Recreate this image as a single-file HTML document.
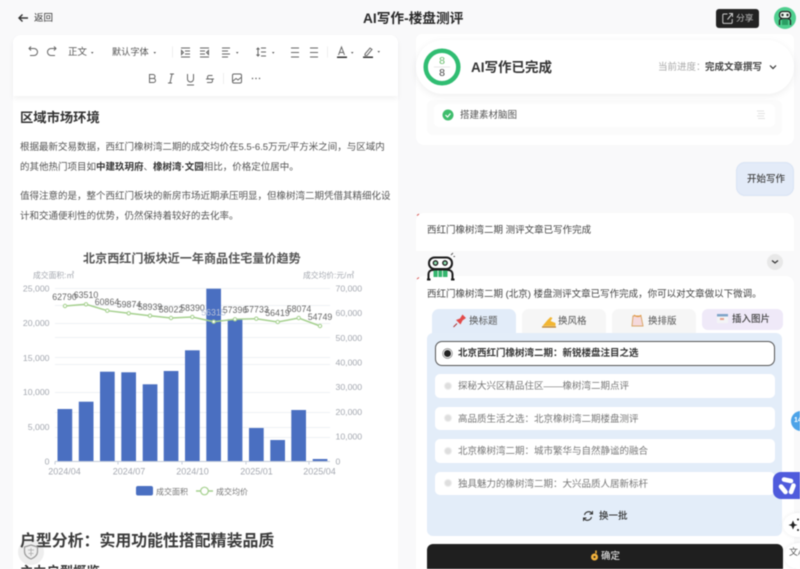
<!DOCTYPE html>
<html lang="zh"><head><meta charset="utf-8"><title>AI写作-楼盘测评</title>
<style>
html,body{margin:0;padding:0;width:800px;height:569px;overflow:hidden;background:#f9f9fa}
#r{position:relative;width:800px;height:569px;overflow:hidden;filter:blur(.4px);font-family:"Liberation Sans","Noto Sans CJK SC",sans-serif;color:#444}
#r div{position:absolute;box-sizing:border-box}
.t{white-space:nowrap;line-height:1;position:absolute}
b{font-weight:700}
.opt{left:435px;width:340px;background:#fff;border-radius:5px}
.rad{position:absolute;box-sizing:border-box;left:443.500px;width:8px;height:8px;border-radius:50%;background:#dedede;border:1.500px solid #eee}
.tab{font-size:9.500px;color:#555}
svg{position:absolute;left:0;top:0}
</style></head><body><div id="r">

<div style="left:13px;top:35px;width:385px;height:540px;background:#fff;border-radius:8px 8px 0 0"></div>
<div style="left:13px;top:35px;width:385px;height:61px;background:#fff;border-radius:8px 8px 0 0;box-shadow:0 3px 6px rgba(0,0,0,.05)"></div>

<span class="t" style="left:34px;top:13.500px;font-size:9.500px;color:#333">返回</span>
<span class="t" style="left:363px;top:11.500px;font-size:13.700px;font-weight:700;color:#2a2a2a">AI写作-楼盘测评</span>

<span class="t" style="left:68px;top:48px;font-size:9.500px;color:#555">正文</span>
<span class="t" style="left:112px;top:48px;font-size:9.200px;color:#555">默认字体</span>

<span class="t" style="left:20px;top:111px;font-size:13.300px;font-weight:700;color:#333">区域市场环境</span>
<span class="t" style="left:20px;top:142.500px;font-size:9.500px;color:#555">根据最新交易数据，西红门橡树湾二期的成交均价在5.5-6.5万元/平方米之间，与区域内</span>
<span class="t" style="left:20px;top:162.500px;font-size:9.500px;color:#555">的其他热门项目如<b style="color:#333">中建玖玥府</b>、<b style="color:#333">橡树湾·文园</b>相比，价格定位居中。</span>
<span class="t" style="left:20px;top:191.500px;font-size:9.500px;color:#555">值得注意的是，整个西红门板块的新房市场近期承压明显，但橡树湾二期凭借其精细化设</span>
<span class="t" style="left:20px;top:211.500px;font-size:9.500px;color:#555">计和交通便利性的优势，仍然保持着较好的去化率。</span>

<div style="left:18px;top:539px;width:26px;height:26px;border-radius:50%;background:rgba(232,232,232,.75)"></div>
<span class="t" style="left:20px;top:534px;font-size:15.900px;font-weight:700;color:#3a3a3a">户型分析：实用功能性搭配精装品质</span>
<span class="t" style="left:20px;top:565px;font-size:13.300px;font-weight:700;color:#333">主力户型概览</span>

<!-- right column -->
<div style="left:416px;top:34px;width:378px;height:111px;background:#fff;border-radius:6px 6px 8px 8px"></div>
<div style="left:427px;top:100px;width:355px;height:35px;background:#fbfbfb;border-radius:6px"></div>
<div style="left:434px;top:104px;width:341px;height:23px;background:#fff;border-radius:5px"></div>
<div style="left:416px;top:40px;width:378px;height:54px;background:#fff;border-radius:27px;box-shadow:0 2px 8px rgba(0,0,0,.07)"></div>
<span class="t" style="left:471px;top:60.500px;font-size:13.500px;font-weight:700;color:#333">AI写作已完成</span>
<span class="t" style="left:658px;top:63px;font-size:9.500px;color:#aaa">当前进度：</span>
<span class="t" style="left:705px;top:63px;font-size:9.500px;font-weight:700;color:#444">完成文章撰写</span>
<span class="t" style="left:436px;top:56px;width:12px;text-align:center;font-size:10.500px;color:#66bb6a">8</span>
<span class="t" style="left:436px;top:68px;width:12px;text-align:center;font-size:10.500px;color:#444">8</span>
<span class="t" style="left:460px;top:111px;font-size:9.500px;color:#555">搭建素材脑图</span>

<div style="left:736px;top:162px;width:58px;height:34px;background:#e3ebf8;border:1px solid #d8e3f4;border-radius:9px"></div>
<span class="t" style="left:747px;top:175px;font-size:9.500px;font-weight:500;color:#444">开始写作</span>

<div style="left:416px;top:213px;width:378px;height:38px;background:#fff;border-radius:8px 8px 0 0"></div>
<span class="t" style="left:427px;top:226px;font-size:9.500px;color:#444">西红门橡树湾二期 测评文章已写作完成</span>
<div style="left:416px;top:276px;width:378px;height:300px;background:#fff;border-radius:8px 8px 0 0"></div>
<span class="t" style="left:427px;top:290px;font-size:9.500px;color:#444">西红门橡树湾二期 (北京) 楼盘测评文章已写作完成，你可以对文章做以下微调。</span>

<div style="left:432px;top:309px;width:84px;height:26px;background:#e2ecf9;border-radius:7px 7px 0 0"></div>
<div style="left:522px;top:309px;width:84px;height:24px;background:#f6f6f6;border-radius:7px 7px 0 0"></div>
<div style="left:612px;top:309px;width:84px;height:24px;background:#f6f6f6;border-radius:7px 7px 0 0"></div>
<div style="left:702px;top:309px;width:81px;height:21px;background:#efe9f8;border-radius:6px"></div>
<span class="t tab" style="left:469px;top:317px">换标题</span>
<span class="t tab" style="left:558px;top:317px">换风格</span>
<span class="t tab" style="left:648px;top:317px">换排版</span>
<span class="t tab" style="left:732px;top:315px;color:#444;font-weight:500">插入图片</span>

<div style="left:427px;top:333px;width:355px;height:203px;background:#e3edf9;border-radius:6px"></div>
<div class="opt" style="top:341px;height:25px;border:1px solid #555;border-radius:7px"></div>
<div class="opt" style="top:374px;height:24px"></div>
<div class="opt" style="top:407px;height:23px"></div>
<div class="opt" style="top:439px;height:24px"></div>
<div class="opt" style="top:472px;height:23px"></div>
<span class="rad" style="left:443px;top:348.500px;width:9px;height:9px;background:#222;border:1.500px solid #fff;box-shadow:0 0 0 .7px #777"></span>
<span class="rad" style="top:382px"></span>
<span class="rad" style="top:414px"></span>
<span class="rad" style="top:447px"></span>
<span class="rad" style="top:479px"></span>
<span class="t" style="left:458px;top:349px;font-size:9.500px;font-weight:700;color:#333">北京西红门橡树湾二期：新锐楼盘注目之选</span>
<span class="t" style="left:458px;top:382px;font-size:9.500px;color:#777">探秘大兴区精品住区——橡树湾二期点评</span>
<span class="t" style="left:458px;top:414.500px;font-size:9.500px;color:#777">高品质生活之选：北京橡树湾二期楼盘测评</span>
<span class="t" style="left:458px;top:447px;font-size:9.500px;color:#777">北京橡树湾二期：城市繁华与自然静谧的融合</span>
<span class="t" style="left:458px;top:479.500px;font-size:9.500px;color:#777">独具魅力的橡树湾二期：大兴品质人居新标杆</span>
<span class="t" style="left:599px;top:512px;font-size:9.500px;font-weight:500;color:#333">换一批</span>

<div style="left:427px;top:544px;width:356px;height:30px;background:#1f1f1f;border-radius:6px"></div>
<span class="t" style="left:601px;top:552px;font-size:9.500px;font-weight:500;color:#ddd">确定</span>

<div style="left:716px;top:9px;width:43px;height:19px;background:#222;border-radius:3px"></div>
<span class="t" style="left:736px;top:14px;font-size:8.800px;color:#bbb">分享</span>

<!-- floating -->
<div style="left:791px;top:411px;width:20px;height:20px;border-radius:50%;background:#4da3e8"></div>
<span class="t" style="left:794px;top:417px;font-size:7px;font-weight:700;color:#fff">14</span>
<div style="left:773px;top:472px;width:30px;height:27px;background:#4f5bdc;border-radius:8px 0 0 8px"></div>
<div style="left:783px;top:513px;width:30px;height:24px;border-radius:50%;background:#fff;box-shadow:0 0 4px rgba(0,0,0,.08)"></div>
<div style="left:784px;top:543px;width:30px;height:26px;border-radius:50%;background:#fff;box-shadow:0 0 4px rgba(0,0,0,.08)"></div>
<span class="t" style="left:789px;top:548px;font-size:9px;color:#555">文<span style="font-size:7px">A</span></span>

<svg width="800" height="569" viewBox="0 0 800 569" fill="none">
 <!-- back arrow -->
 <path d="M28 18H19M22.500 14.500L19 18l3.500 3.500" stroke="#333" stroke-width="1.400"/>
 <!-- toolbar -->
 <g stroke="#666" stroke-width="1">
  <path d="M29 48.500h5a3.300 3.300 0 0 1 0 7h-4M31 46.500l-2 2 2 2"/>
  <path d="M56 48.500h-5a3.300 3.300 0 0 0 0 7h4M54 46.500l2 2-2 2"/>
  <path d="M181 48h9M185 51h5M185 54h5M181 57h9M181.500 50.500v4l2-2z"/>
  <path d="M200 48h9M200 51h5M200 54h5M200 57h9M208.500 50.500v4l-2-2z"/>
  <path d="M222 48h8M222 51h6M222 54h8M222 57h6"/>
  <path d="M261 48h5M261 52h5M261 56h5M258 48v8M256.500 49.500l1.500-1.500 1.500 1.500M256.500 54.500l1.500 1.500 1.500-1.500"/>
  <path d="M291 48h8M291 52.500h8M291 57h8"/>
  <path d="M310 48h8M310 52.500h8M310 57h8"/>
  <path d="M338.500 55l3-8 3 8M339.500 52.500h4"/>
  <path d="M365 54l5-6 2 1.500-5 6h-2z"/>
  <path d="M172.500 46.500v11M327.500 46.500v11M223.500 73v11" stroke="#eee"/>
  <path d="M149.500 74.500h3.500a2 2 0 0 1 0 4h-3.500zM149.500 78.500h4a2 2 0 0 1 0 4h-4zM149.500 74v9"/>
  <path d="M170 74h4M168 83h4M172 74l-2 9"/>
  <path d="M187.500 74v5a3 3 0 0 0 6 0v-5M187 85h7"/>
  <path d="M212.500 75.500h-4a2 2 0 0 0 0 3.500h3a2 2 0 0 1 0 3.500h-4.500M206 79h8"/>
  <rect x="232.500" y="74" width="9" height="9" rx="1.500"/>
  <path d="M233 81l3-2.500 2 1.500 3-2.500"/>
 </g>
 <g fill="#555">
  <path d="M91 52h2.500l-1.250 1.800zM153.500 52h2.500l-1.250 1.800zM236 52h2.500l-1.250 1.800zM272 52h2.500l-1.250 1.800zM351 52h2.500l-1.250 1.800zM377.500 51h2.500l-1.250 1.800z"/>
  <rect x="337" y="56.500" width="10" height="1.500" fill="#333"/>
  <rect x="363" y="56.500" width="10" height="1.500" fill="#333"/>
  <circle cx="252.500" cy="78.500" r=".7"/><circle cx="256" cy="78.500" r=".7"/><circle cx="259.500" cy="78.500" r=".7"/>
 </g>

 <!-- chart -->
 <g stroke="#eef1f4" stroke-width="1">
  <path d="M55 288.500H330M55 305.500H330M55 323.500H330M55 337.500H330M55 357.500H330M55 364.500H330M55 392.500H330M55 412.500H330M55 427.500H330M55 437.500H330"/>
 </g>
 <g fill="#4a6fc1">
  <rect x="57.500" y="409" width="14.700" height="52"/><rect x="78.800" y="401.700" width="14.700" height="59.300"/>
  <rect x="100" y="371.700" width="14.700" height="89.300"/><rect x="121.300" y="372.300" width="14.700" height="88.700"/>
  <rect x="142.700" y="384.300" width="14.700" height="76.700"/><rect x="163.700" y="371" width="14.700" height="90"/>
  <rect x="185" y="350.300" width="14.700" height="110.700"/><rect x="206.300" y="288.700" width="14.700" height="172.300"/>
  <rect x="227.700" y="319.300" width="14.700" height="141.700"/><rect x="249" y="428" width="14.700" height="33"/>
  <rect x="270.300" y="440" width="14.700" height="21"/><rect x="291.300" y="410" width="14.700" height="51"/>
  <rect x="312.700" y="459" width="14.700" height="2"/>
 </g>
 <path d="M55 461.500H330M55 461.500v3M118 461.500v3M182 461.500v3M246 461.500v3M309 461.500v3" stroke="#c4ccd8" stroke-width="1"/>
 <polyline points="65,306 86,304.300 107.300,310.700 128.700,313.300 150,315.700 171,318 192.300,317 213.700,321.700 235,319.300 256.300,318.700 277.700,322 298.700,318 320,326" stroke="#a5d08e" stroke-width="1.500"/>
 <g fill="#fff" stroke="#a5d08e" stroke-width="1">
  <circle cx="65" cy="306" r="1.700"/><circle cx="86" cy="304.300" r="1.700"/><circle cx="107.300" cy="310.700" r="1.700"/><circle cx="128.700" cy="313.300" r="1.700"/><circle cx="150" cy="315.700" r="1.700"/><circle cx="171" cy="318" r="1.700"/><circle cx="192.300" cy="317" r="1.700"/><circle cx="213.700" cy="321.700" r="1.700"/><circle cx="235" cy="319.300" r="1.700"/><circle cx="256.300" cy="318.700" r="1.700"/><circle cx="277.700" cy="322" r="1.700"/><circle cx="298.700" cy="318" r="1.700"/><circle cx="320" cy="326" r="1.700"/>
 </g>
 <g font-family="Liberation Sans,sans-serif" font-size="8.800" fill="#666" text-anchor="middle">
  <text x="64.500" y="300">62790</text><text x="86" y="298">63510</text><text x="107" y="305">60864</text><text x="129" y="307.500">59874</text><text x="150" y="310">58939</text><text x="171" y="312.500">58022</text><text x="192.500" y="311">58390</text><text x="213.500" y="315.500" fill="#b8c2d8">56315</text><text x="235" y="313">57396</text><text x="256.500" y="312.500">57733</text><text x="277.500" y="316">56419</text><text x="299" y="312">58074</text><text x="320" y="320">54749</text>
 </g>
 <g font-family="Liberation Sans,sans-serif" font-size="8.700" fill="#a4a8b0" text-anchor="end">
  <text x="49.500" y="291.500">25,000</text><text x="49.500" y="326">20,000</text><text x="49.500" y="361">15,000</text><text x="49.500" y="395">10,000</text><text x="49.500" y="430">5,000</text><text x="49.500" y="464.500">0</text>
 </g>
 <g font-family="Liberation Sans,sans-serif" font-size="8.700" fill="#a4a8b0">
  <text x="335.500" y="291.500">70,000</text><text x="335.500" y="316">60,000</text><text x="335.500" y="341">50,000</text><text x="335.500" y="365.500">40,000</text><text x="335.500" y="390">30,000</text><text x="335.500" y="415">20,000</text><text x="335.500" y="439.500">10,000</text><text x="335.500" y="464.500">0</text>
 </g>
 <g font-family="Liberation Sans,sans-serif" font-size="9" fill="#a4a8b0" text-anchor="middle">
  <text x="64.500" y="474.500">2024/04</text><text x="129" y="474.500">2024/07</text><text x="192.500" y="474.500">2024/10</text><text x="256.500" y="474.500">2025/01</text><text x="319.500" y="474.500">2025/04</text>
 </g>
 <g font-family="Liberation Sans,Noto Sans CJK SC,sans-serif">
  <text x="83" y="262.500" font-size="12.100" font-weight="700" fill="#555">北京西红门板块近一年商品住宅量价趋势</text>
  <text x="33" y="278" font-size="7.800" fill="#a4a8b0">成交面积:㎡</text>
  <text x="303" y="278" font-size="7.800" fill="#a4a8b0">成交均价:元/㎡</text>
  <text x="156" y="494.500" font-size="8" fill="#777">成交面积</text>
  <text x="216" y="494.500" font-size="8" fill="#777">成交均价</text>
 </g>
 <rect x="136" y="486" width="17" height="9.500" rx="2" fill="#4a6fc1"/>
 <path d="M196 491h17" stroke="#a5d08e" stroke-width="1.500"/>
 <circle cx="204.500" cy="491" r="3.800" fill="#fff" stroke="#a5d08e" stroke-width="1.200"/>

 <!-- shield -->
 <path d="M31 545l6.500 2v4.500c0 4-3 6-6.500 7.500-3.500-1.500-6.500-3.500-6.500-7.500V547z" stroke="#999" stroke-width="1.200"/>
 <path d="M28 550h6M31 548v8M28.500 553.500h5" stroke="#aaa" stroke-width=".8"/>

 <!-- share icon -->
 <path d="M727.500 14h-3.500a1.200 1.200 0 0 0-1.200 1.200v7a1.200 1.200 0 0 0 1.200 1.200h7a1.200 1.200 0 0 0 1.200-1.200V19M727.500 19.500l4.500-5.500M729 13.500h3.500V17" stroke="#ccc" stroke-width="1"/>
 <!-- avatar -->
 <circle cx="785" cy="18" r="11" fill="#4fcf8f"/>
 <rect x="779.500" y="11.500" width="11" height="7" rx="3" fill="#eaf7ee" stroke="#222" stroke-width="1.300"/>
 <circle cx="782.500" cy="15" r="1.200" fill="#222"/><circle cx="787.500" cy="15" r="1.200" fill="#222"/>
 <path d="M779.500 25v-4a2 2 0 0 1 2-2h7a2 2 0 0 1 2 2v4" stroke="#222" stroke-width="1.300"/>
 <rect x="782" y="19" width="6" height="6" fill="#2a9e63"/>

 <!-- ring -->
 <circle cx="442" cy="67" r="16.300" stroke="#30bd72" stroke-width="4.500"/>
 <path d="M434 67h16" stroke="#ddd" stroke-width=".7"/>
 <!-- chevrons -->
 <path d="M770 65.500l3 3 3-3" stroke="#333" stroke-width="1.200"/>
 <!-- check -->
 <circle cx="448" cy="115" r="5.500" fill="#3ebd6c"/>
 <path d="M445.500 115l2 2 3-3.500" stroke="#fff" stroke-width="1.200"/>
 <path d="M757 111h7M758 113.500h7M757 116h7M758 118.500h7" stroke="#e2e2e2" stroke-width="1"/>
 <!-- red ticks -->
 <path d="M417 215.500l2-1.500M417 279l2-1.500" stroke="#d9534f" stroke-width="1"/>
 <!-- robot -->
 <rect x="429" y="257.500" width="23" height="11.500" rx="5.500" fill="#fff" stroke="#1c1c1c" stroke-width="2"/>
 <circle cx="435.500" cy="263" r="2.200" stroke="#1c1c1c" stroke-width="1.300" fill="#8fdcae"/>
 <circle cx="445" cy="263" r="2.200" stroke="#1c1c1c" stroke-width="1.300" fill="#8fdcae"/>
 <path d="M428.500 279v-5a4 4 0 0 1 4-4h16a4 4 0 0 1 4 4v5" stroke="#1c1c1c" stroke-width="2"/>
 <rect x="433.500" y="270.500" width="14" height="6.500" fill="#35b56e"/>
 <path d="M438 270.500v6.500M442.500 270.500v6.500" stroke="#fff" stroke-width=".8"/>
 <path d="M427 279.500h3.500M451 279.500h3.500" stroke="#1c1c1c" stroke-width="2"/>
 <path d="M451 255l2-2M453.500 256.500h1.500" stroke="#555" stroke-width=".9"/>
 <circle cx="775" cy="262" r="8" fill="#e8e8e8"/>
 <path d="M772 260.500l3 2.500 3-2.500" stroke="#333" stroke-width="1.200"/>
 <!-- tab emoji -->
 <path d="M456 320l4-1.500 2.500-4 3.500 3.500-3.500 2.500-2 4z" fill="#e24b4b"/><path d="M457 323.500l-3.500 3.500" stroke="#a33" stroke-width="1"/>
 <path d="M542.500 326l5-6 3-3 2 1-2 3 5 2v3z" fill="#f2b632"/><path d="M542 327h14" stroke="#b8791a" stroke-width="1.200"/>
 <path d="M633 316h8l2 10h-11z" fill="#f5d9dc" stroke="#d9a66a" stroke-width="1"/><path d="M634 315c2 2 6 2 7 0" stroke="#e39a45" stroke-width="1.200"/>
 <rect x="717" y="314" width="11" height="9" fill="#f3f4f6"/><rect x="717" y="314" width="11" height="2.500" fill="#7fa4c8"/><rect x="720" y="318" width="4" height="2" fill="#e5a28f"/>
 <!-- refresh -->
 <path d="M592 513.500a4.200 4.200 0 0 0-7.500 1.500M584 518.500a4.200 4.200 0 0 0 7.500-1.500" stroke="#333" stroke-width="1.100"/>
 <path d="M592.500 511v3h-3M583.500 521v-3h3" stroke="#333" stroke-width="1"/>
 <!-- ok hand -->
 <circle cx="594.500" cy="557" r="3.500" fill="#f3b23c"/><path d="M596 553.500v-3" stroke="#f3b23c" stroke-width="1.500"/>
 <circle cx="594.500" cy="557" r="1" fill="#1f1f1f"/>
 <!-- purple logo -->
 <g stroke="#fff" stroke-width="4.600" stroke-linecap="round">
  <path d="M784 479.500l7 1.500"/>
  <path d="M793.500 485.500l-2.500 6.500"/>
  <path d="M785.500 492l-4.500-5.500"/>
 </g>
 <!-- sparkle -->
 <path d="M793 520.500l1.500 3.500 3 1-3 1-1.500 3.500-1.500-3.500-3-1 3-1z" fill="#222"/>
 <circle cx="798" cy="519.500" r="1" fill="#222"/><circle cx="798" cy="530" r="1" fill="#222"/>
</svg>
</div></body></html>
